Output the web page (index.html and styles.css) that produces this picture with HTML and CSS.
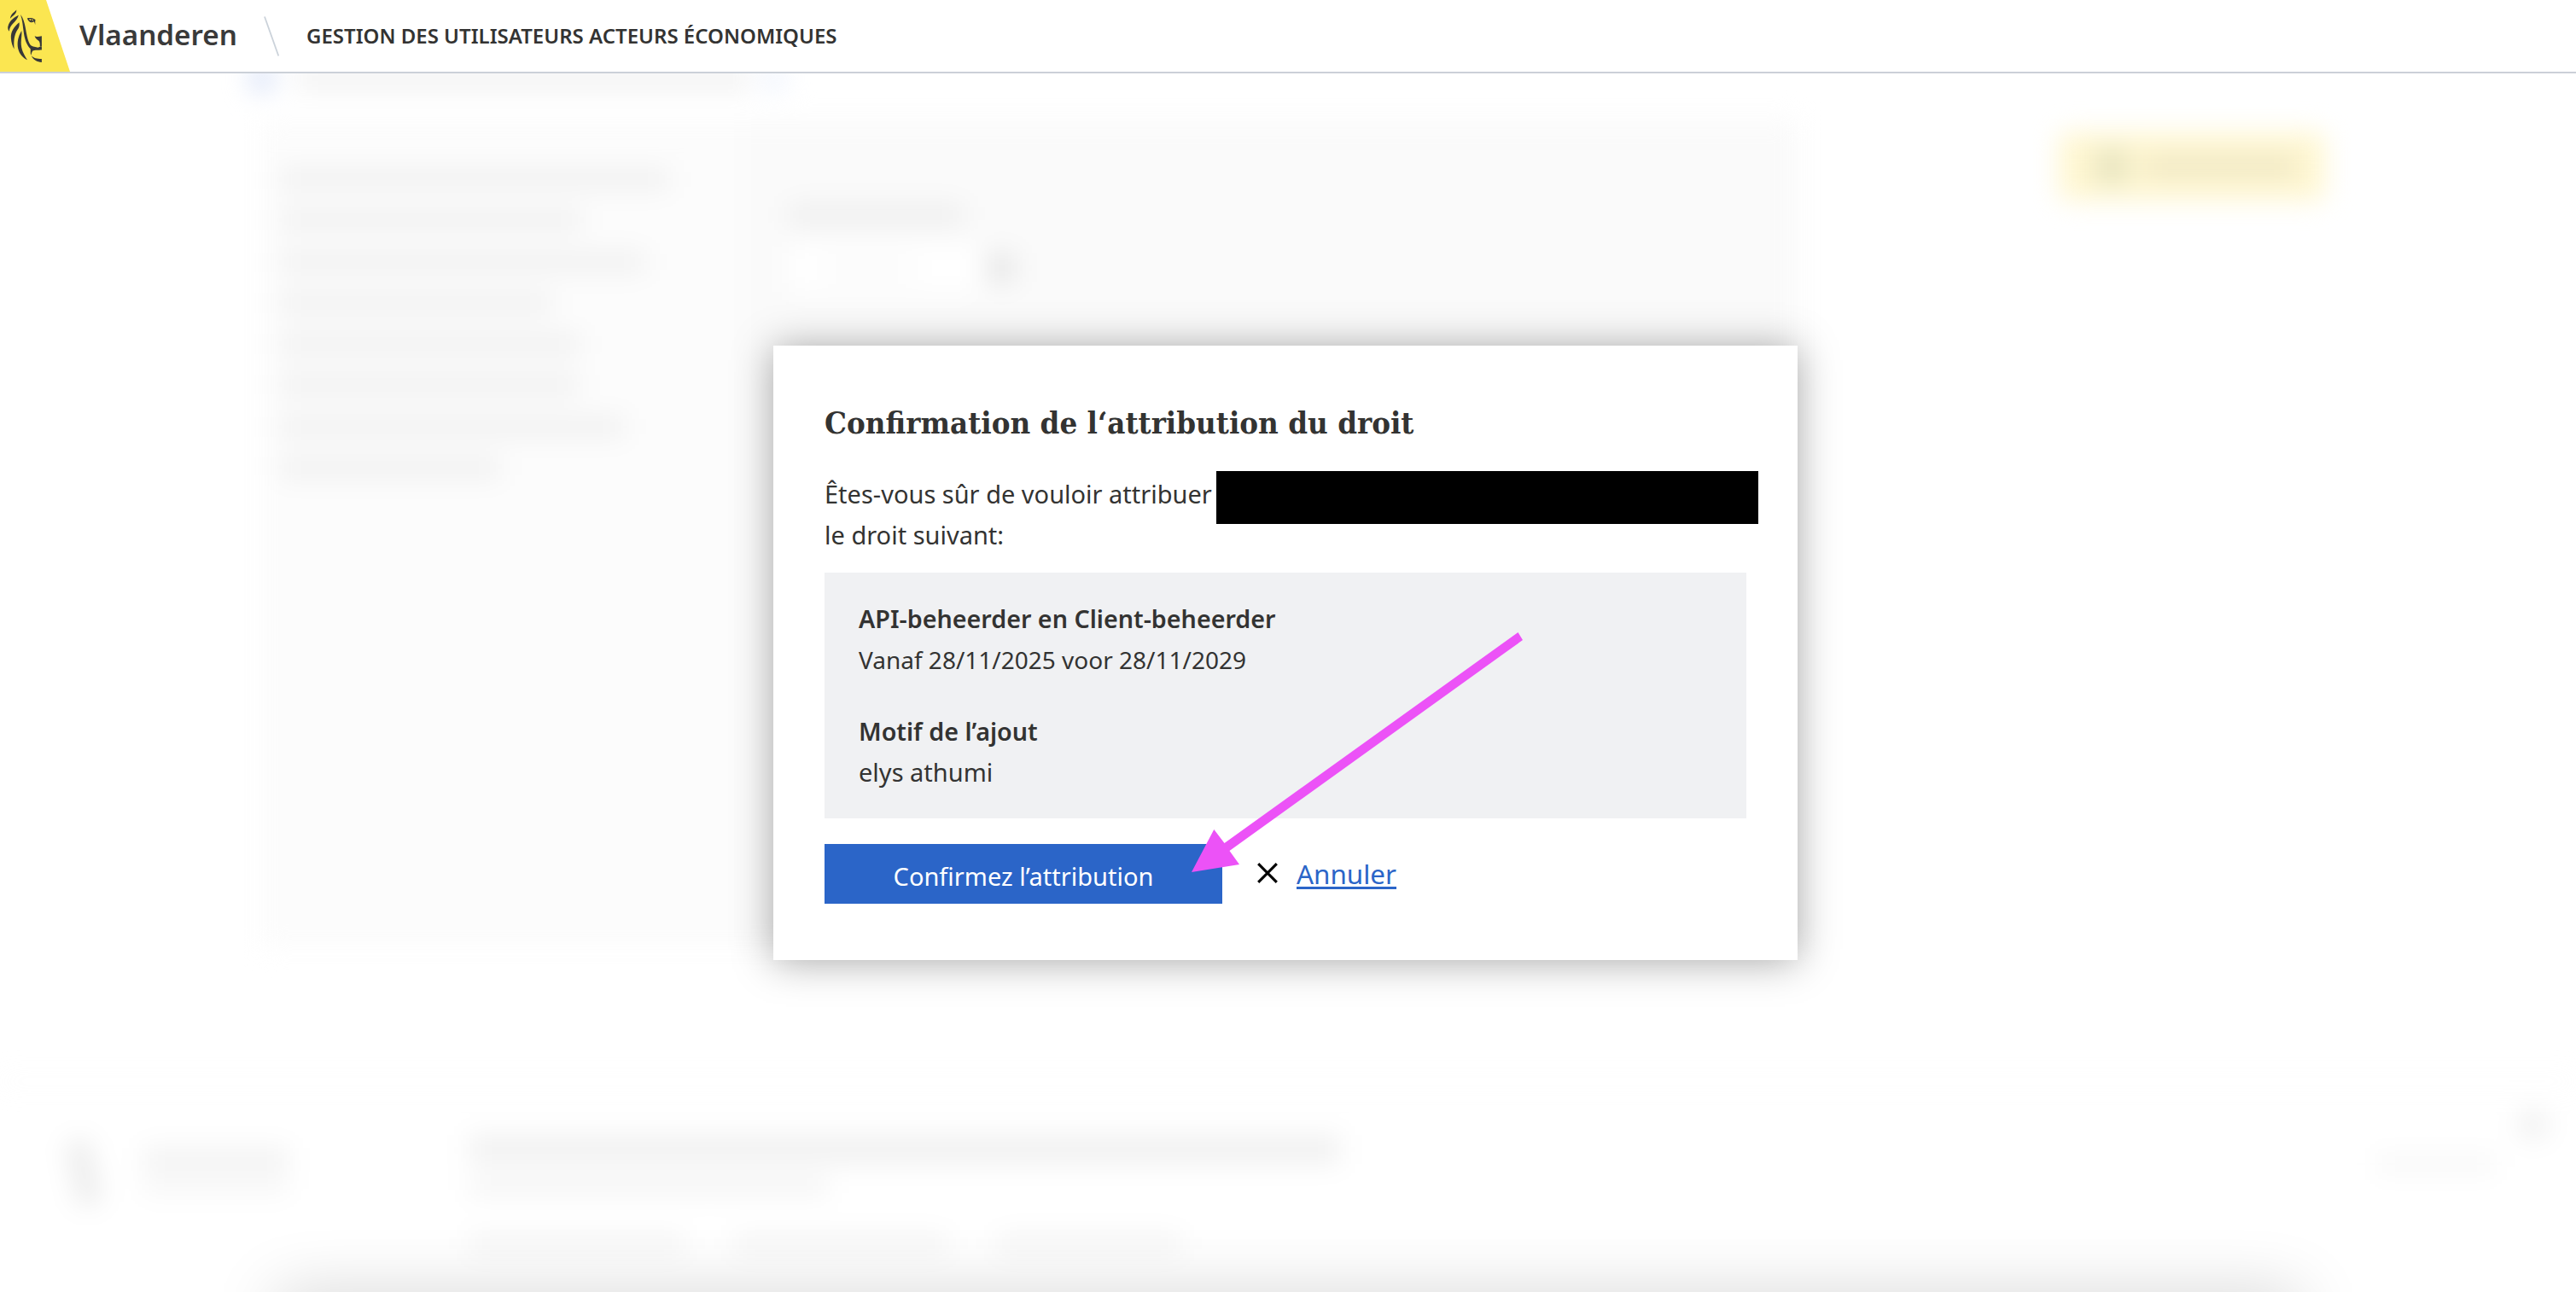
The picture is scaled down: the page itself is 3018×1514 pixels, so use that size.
FILE: index.html
```html
<!DOCTYPE html>
<html lang="fr">
<head>
<meta charset="utf-8">
<title>Gestion des utilisateurs acteurs économiques</title>
<link rel="stylesheet" href="styles.css">
</head>
<body>
<header class="header">
  <svg class="flag" width="82" height="84" viewBox="0 0 82 84" aria-hidden="true">
    <path fill="#fbe651" d="M0 0H54L82 84H0z"/>
    <g fill="#383838">
      <path d="M19.3 11.4C17 14.3 12.5 16 11.9 21.8C14.5 18.3 19.4 17 19.3 11.4z"/>
      <path d="M21.8 17.8C17 20.5 11.5 23 9.3 31.2C8.9 33.2 9.6 35 10.8 36.8C10.8 28.5 19.8 26 21.8 17.8z"/>
      <path d="M22.5 26.3C17 31 12.3 36.5 12.9 45C13.2 50 14.6 54 16.6 57.5C15.6 45 17.5 39 21.4 33.5C22.6 31.5 23 29 22.5 26.3z"/>
      <path d="M25.3 36C21 43 19.8 50 21.2 57C22.8 63.5 26.5 67.5 32 70.3C27.7 63 24.7 58 24.7 50C24.8 45 25.8 40.5 25.3 36z"/>
      <path d="M24 16.9C27 20.5 28.4 25.5 29.6 31.5C31 39 32.2 47.5 35.5 52.5C38.5 55.5 41.5 54.5 44.8 55.8C45.6 55 46.5 55 48.9 55V58.4C45 58.8 40.5 58.2 38.4 59.5C37.1 61 37 63 36.2 64.8C35.4 62 36 59.5 35.7 57.2C31.8 53.5 29.3 47.5 28 39.5C26.8 31.5 26.5 23.5 24 16.9z"/>
      <path d="M40.6 41.9C42 43 44.3 43.3 48.9 42.2V54.8H46.8V52C46.8 50.5 46.5 49.4 45.3 47.8C43.5 46 41.2 45 40.6 41.9z"/>
      <path d="M36.8 65.2C39.5 68 43 69 48.9 69V73C43.5 72.6 38.8 70 36.8 65.2z"/>
      <path fill-rule="evenodd" d="M31.8 21.4C34.5 20.8 38.7 20.7 41.6 23.2C40.8 24.6 41.6 26.4 41.2 29C40.7 26.8 40.3 25.7 39.5 25.2C36.5 27.4 33.5 25.5 31.8 21.4zM34 22.5C35 24.5 37.6 25 39.3 23.4C37.8 22.2 36 22 34 22.5z"/>
      <circle cx="36.8" cy="23.4" r="1"/>
    </g>
  </svg>
  <span class="brand">Vlaanderen</span>
  <svg class="slash" width="20" height="50" viewBox="0 0 20 50" aria-hidden="true"><path d="M2 2.5L18.3 48.5" stroke="#cbd2da" stroke-width="1.8"/></svg>
  <span class="title">GESTION DES UTILISATEURS ACTEURS ÉCONOMIQUES</span>
</header>

<div class="page" aria-hidden="true">
  <div class="crumbs"><i class="dot"></i><i class="bar trail"></i><i class="dot pale"></i></div>
  <div class="columns">
    <div class="panel">
      <div class="nav">
        <i class="bar w1"></i><i class="bar w2"></i><i class="bar w3"></i><i class="bar w4"></i>
        <i class="bar w5"></i><i class="bar w6"></i><i class="bar w7"></i><i class="bar w8"></i>
      </div>
      <div class="form">
        <i class="bar label"></i>
        <div class="field"><div class="input"><i class="bar value"></i></div><i class="picker"></i></div>
      </div>
    </div>
    <div class="cta"><i class="cta-icon"></i><i class="cta-text"></i></div>
  </div>
  <div class="footer">
    <i class="lion"></i>
    <div class="owner"><i class="bar name"></i><i class="bar sub"></i></div>
    <div class="about">
      <i class="bar headline"></i><i class="bar byline"></i>
      <div class="links"><i class="bar l1"></i><i class="bar l2"></i><i class="bar l3"></i></div>
    </div>
    <div class="side"><i class="round"></i><i class="bar lang"></i></div>
  </div>
</div>
<div class="sheet" aria-hidden="true"></div>

<div class="overlay">
  <section class="modal" role="dialog" aria-labelledby="modal-title">
    <h2 class="modal-title" id="modal-title">Confirmation de l‘attribution du droit</h2>
    <p class="question">Êtes-vous sûr de vouloir attribuer<span class="redacted"></span><br>le droit suivant:</p>
    <div class="summary">
      <div><strong>API-beheerder en Client-beheerder</strong><br><span class="dates">Vanaf 28/11/2025 voor 28/11/2029</span></div>
      <div><strong>Motif de l’ajout</strong><br>elys athumi</div>
    </div>
    <div class="actions">
      <button class="confirm" type="button">Confirmez l’attribution</button>
      <svg class="cross" width="26" height="26" viewBox="0 0 26 26" aria-hidden="true"><path d="M2.2 2.2L23.8 23.8M23.8 2.2L2.2 23.8" stroke="#000" stroke-width="3.1"/></svg>
      <a class="cancel" href="#">Annuler</a>
    </div>
    <svg class="arrow" width="390" height="284" viewBox="1396 740 390 284" aria-hidden="true"><path fill="#ec52f7" d="M1396 1022L1422.3 972L1434.5 988L1778.5 741L1784 750L1440.500 997L1452 1013z"/></svg>
  </section>
</div>
</body>
</html>
```
FILE: styles.css
```css
* { box-sizing: border-box; }
body {
  margin: 0;
  height: 1514px;
  position: relative;
  overflow: hidden;
  background: #fff;
  color: #333332;
  font-family: "Noto Sans", "Open Sans", sans-serif;
}
i { display: block; flex: none; }

.header {
  position: relative;
  z-index: 1;
  display: flex;
  align-items: center;
  height: 86px;
  background: #fff;
  border-bottom: 2px solid #cbd0d8;
}
.flag { flex: none; }
.brand {
  width: 185px;
  margin-left: 11px;
  padding-bottom: 2px;
  font-size: 33.2px;
  font-weight: 600;
  line-height: 44px;
  color: #3a3a3a;
  white-space: nowrap;
}
.slash { margin: 0 31px 0 30px; }
.title {
  font-size: 24px;
  font-weight: 600;
  line-height: 40px;
  white-space: nowrap;
}

/* page content behind the dialog */
.page {
  height: 1428px;
  margin-top: -12px;
  filter: blur(15px);
}
.bar {
  height: 24px;
  background: rgba(0, 0, 0, .046);
}
.crumbs {
  display: flex;
  align-items: center;
  height: 36px;
  padding-left: 292px;
}
.dot { width: 30px; height: 30px; border-radius: 50%; background: #d5dff6; }
.dot.pale { background: #eef3fd; }
.trail { width: 530px; margin: 0 14px 0 26px; height: 30px; }
.columns {
  display: flex;
  align-items: flex-start;
  margin-top: 32px;
  padding-left: 306px;
}
.panel {
  display: flex;
  width: 1800px;
  height: 968px;
  background: #fafafa;
}
.nav {
  display: flex;
  flex-direction: column;
  gap: 24.3px;
  width: 564px;
  padding: 56px 0 0 22px;
  background: #fcfcfc;
}
.w1 { width: 456px; }
.w2 { width: 354px; }
.w3 { width: 428px; }
.w4 { width: 318px; }
.w5 { width: 352px; }
.w6 { width: 350px; }
.w7 { width: 404px; }
.w8 { width: 258px; }
.form { padding: 98px 0 0 54px; }
.label { width: 205px; }
.field { display: flex; align-items: center; gap: 12px; margin-top: 22px; }
.input { width: 222px; height: 56px; padding: 19px 36px; background: #fff; }
.value { width: 112px; height: 18px; background: rgba(0, 0, 0, .025); }
.picker { width: 30px; height: 34px; background: rgba(0, 0, 0, .08); }
.cta {
  display: flex;
  align-items: center;
  gap: 20px;
  width: 312px;
  height: 80px;
  margin: 13px 0 0 306px;
  padding-left: 42px;
  border-radius: 10px;
  background: #fff7d2;
}
.cta-icon { width: 40px; height: 40px; background: rgba(90, 120, 90, .14); }
.cta-text { width: 176px; height: 26px; background: rgba(0, 0, 0, .06); }
.footer {
  display: flex;
  height: 246px;
  margin-top: 156px;
  padding: 58px 32px 0 72px;
  border-top: 2px solid #f4f4f4;
}
.lion { width: 28px; height: 76px; margin: 10px 0 0 12px; transform: rotate(-12deg); background: rgba(0, 0, 0, .075); }
.owner { width: 170px; margin: 18px 0 0 56px; }
.name { height: 30px; }
.sub { height: 16px; margin-top: 8px; background: rgba(0, 0, 0, .04); }
.about { margin: 4px 0 0 212px; }
.headline { width: 1020px; height: 34px; background: rgba(0, 0, 0, .055); }
.byline { width: 420px; height: 20px; margin-top: 16px; }
.links { display: flex; gap: 58px; margin-top: 46px; }
.links .bar { height: 22px; background: rgba(0, 0, 0, .04); }
.l1 { width: 252px; }
.l2 { width: 250px; }
.l3 { width: 216px; }
.side { display: flex; flex-direction: column; margin-left: auto; }
.round { width: 36px; height: 36px; margin: -26px 0 0 166px; border-radius: 50%; background: rgba(0, 0, 0, .06); }
.lang { width: 140px; height: 20px; margin-top: 18px; background: rgba(0, 0, 0, .03); }

/* raised sheet just below the fold; only its shadow reaches the view */
.sheet {
  height: 60px;
  margin: 12px 324px 0;
  background: #fff;
  box-shadow: 0 0 76px rgba(0, 0, 0, .17);
}

.overlay {
  position: absolute;
  inset: 0;
  z-index: 2;
  display: flex;
  align-items: flex-start;
  padding: 405px 0 0 906px;
}
.modal {
  position: relative;
  width: 1200px;
  height: 720px;
  padding: 66px 60px;
  background: #fff;
  box-shadow: 0 2px 44px rgba(0, 0, 0, .34);
  font-size: 29px;
  font-weight: 400;
  line-height: 48px;
  white-space: nowrap;
}
.modal-title {
  position: relative;
  top: 1px;
  margin: 0 0 36px;
  font: bold 36.3px/48px "DejaVu Serif Condensed", "DejaVu Serif", serif;
  font-stretch: condensed;
}
.question { position: relative; margin: 0; }
.redacted {
  position: absolute;
  left: 459px;
  top: -3px;
  width: 635px;
  height: 62px;
  background: #000;
}
.summary {
  display: flex;
  flex-direction: column;
  gap: 36px;
  height: 288px;
  margin: 20px 0 30px;
  padding: 30px 40px;
  background: #f0f1f3;
}
.summary strong { font-size: 28.7px; font-weight: 600; }
.dates { font-size: 28px; }
.actions { display: flex; align-items: center; height: 70px; }
.confirm {
  width: 466px;
  height: 70px;
  padding: 5px 0 0;
  border: 0;
  background: #2b65c8;
  color: #fff;
  font: inherit;
}
.cross { margin: 0 21px 2px 40px; }
.cancel {
  color: #2b65c8;
  font-size: 31.4px;
  text-decoration: underline;
  text-decoration-thickness: 3px;
  text-underline-offset: 3px;
  text-decoration-skip-ink: none;
}
.arrow { position: absolute; left: 490px; top: 335px; }
```
